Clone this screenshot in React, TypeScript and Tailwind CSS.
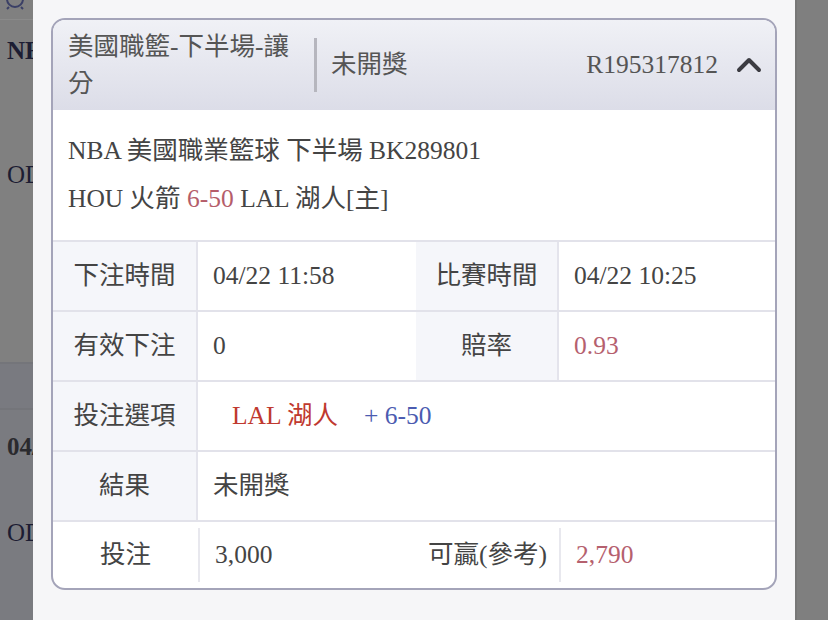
import React from "react"

const font = { fontFamily: '"Liberation Serif", "Noto Sans CJK TC", serif' }

function ChevronUp() {
  return (
    <svg width="26" height="18" viewBox="0 0 26 18" className="ml-[18px]">
      <polyline points="3,14 13,4 23,14" fill="none" stroke="#3c3c42" strokeWidth="4" strokeLinecap="round" strokeLinejoin="round" />
    </svg>
  )
}

function SideStrip() {
  return (
    <div className="w-[33px] shrink-0 overflow-hidden bg-[#808080] flex flex-col text-[25px]">
      <div className="h-[20px] relative border-b border-[#8a8a8a]">
        <svg width="22" height="22" viewBox="0 0 22 22" className="absolute left-[4px] top-[-12px]">
          <circle cx="11" cy="11" r="8" fill="none" stroke="#3a3f66" strokeWidth="2" />
          <path d="M5 19 L3 21 M17 19 L19 21" stroke="#3a3f66" strokeWidth="2" />
        </svg>
      </div>
      <div className="h-[342px] pl-[7px] pt-[14px] whitespace-nowrap">
        <div className="font-bold text-[#1c1d33] leading-[34px]">NBA</div>
        <div className="mt-[90px] text-[#1c1d33] leading-[34px]">OD</div>
      </div>
      <div className="h-[48px] bg-[#797a80] border-y-2 border-[#74757a]" />
      <div className="flex-1 bg-[#7a7b80] pl-[7px] pt-[20px] whitespace-nowrap">
        <div className="font-bold text-[#2a2a2e] leading-[34px]">04/22</div>
        <div className="mt-[52px] text-[#1c1d33] leading-[34px]">OD</div>
      </div>
    </div>
  )
}

export default function App() {
  const labelCell = "w-[145px] shrink-0 flex items-center justify-center bg-[#f5f6fa] border-r-2 border-[#e4e4ec]"
  const label2Cell = "w-[143px] shrink-0 flex items-center justify-center bg-[#f5f6fa] border-r-2 border-[#e4e4ec]"
  const row = "h-[70px] flex border-t-2 border-[#e2e2ea]"

  return (
    <div className="w-[828px] h-[620px] flex overflow-hidden text-[#444]" style={font}>
      <SideStrip />

      <div className="w-[762px] shrink-0 bg-[#f6f6f8] px-[18px] pt-[18px]">
        <div className="border-2 border-[#a4a4b9] rounded-[14px] overflow-hidden bg-white text-[25.5px]">
          {/* Header */}
          <div className="h-[90px] flex items-center pl-[15px] pr-[13px] bg-gradient-to-b from-[#f0f1f6] to-[#dcdde8] text-[#555]">
            <div className="w-[232px] leading-[37px]">美國職籃-下半場-讓分</div>
            <div className="w-[3px] h-[54px] bg-[#b6b6be] mx-[14px]" />
            <div>未開獎</div>
            <div className="ml-auto">R195317812</div>
            <ChevronUp />
          </div>

          {/* Match info */}
          <div className="px-[15px] py-[17px] leading-[48px]">
            <div>NBA 美國職業籃球 下半場 BK289801</div>
            <div>
              HOU 火箭 <span className="text-[#b55d6a]">6-50</span> LAL 湖人[主]
            </div>
          </div>

          {/* Details */}
          <div className={row}>
            <div className={labelCell}>下注時間</div>
            <div className="w-[218px] shrink-0 flex items-center pl-[15px]">04/22 11:58</div>
            <div className={label2Cell}>比賽時間</div>
            <div className="flex-1 flex items-center pl-[15px]">04/22 10:25</div>
          </div>
          <div className={row}>
            <div className={labelCell}>有效下注</div>
            <div className="w-[218px] shrink-0 flex items-center pl-[15px]">0</div>
            <div className={label2Cell}>賠率</div>
            <div className="flex-1 flex items-center pl-[15px] text-[#b5606e]">0.93</div>
          </div>
          <div className={row}>
            <div className={labelCell}>投注選項</div>
            <div className="flex-1 flex items-center pl-[34px]">
              <span className="text-[#c0392f]">LAL 湖人</span>
              <span className="ml-[26px] text-[#4b5bb0]">+ 6-50</span>
            </div>
          </div>
          <div className={row}>
            <div className={labelCell}>結果</div>
            <div className="flex-1 flex items-center pl-[15px]">未開獎</div>
          </div>
          <div className="h-[68px] flex border-t-2 border-[#e2e2ea]">
            <div className="w-[145px] shrink-0 flex items-center justify-center">投注</div>
            <div className="w-[218px] shrink-0 flex items-center border-l-2 border-[#e8e8ee] my-[6px] pl-[15px]">3,000</div>
            <div className="w-[143px] shrink-0 flex items-center justify-center">可贏(參考)</div>
            <div className="flex-1 flex items-center border-l-2 border-[#e8e8ee] my-[6px] pl-[15px] text-[#b5606e]">2,790</div>
          </div>
        </div>
      </div>

      <div className="flex-1 bg-[#7f7f7f] border-l-2 border-[#777]" />
    </div>
  )
}
